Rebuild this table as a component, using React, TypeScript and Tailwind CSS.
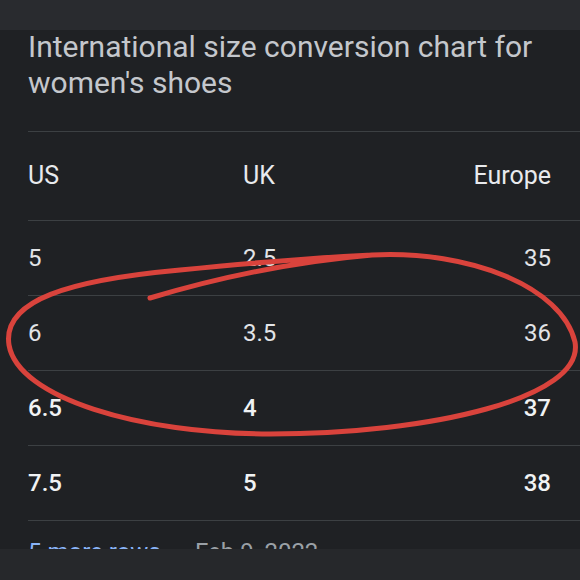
const rows = [
  { us: "5", uk: "2.5", eu: "35", bold: false },
  { us: "6", uk: "3.5", eu: "36", bold: false },
  { us: "6.5", uk: "4", eu: "37", bold: true },
  { us: "7.5", uk: "5", eu: "38", bold: true },
];

export default function App() {
  return (
    <div
      className="relative w-[580px] h-[580px] overflow-hidden bg-[#1f2124] flex flex-col"
      style={{ fontFamily: "Roboto, 'Open Sans', sans-serif" }}
    >
      <div className="h-[30px] bg-[#292b2f] shrink-0" />

      <div className="h-[519px] shrink-0 overflow-hidden pl-[28px] flex flex-col">
        <h1 className="mt-[-1px] text-[30px] leading-[36px] text-[#c4c7cc] font-normal">
          International size conversion chart for
          <br />
          women's shoes
        </h1>

        <div className="mt-[30px] border-t border-[#3c4043]">
          <div className="h-[88px] grid grid-cols-[215px_1fr_auto] items-center pr-[29px] text-[25px] text-[#e8eaed]">
            <span>US</span>
            <span>UK</span>
            <span>Europe</span>
          </div>
          {rows.map((r) => (
            <div
              key={r.us}
              className={
                r.bold
                  ? "h-[75px] border-t border-[#3c4043] grid grid-cols-[215px_1fr_auto] items-center pr-[29px] text-[24px] text-[#f1f3f4] font-medium"
                  : "h-[75px] border-t border-[#3c4043] grid grid-cols-[215px_1fr_auto] items-center pr-[29px] text-[24px] text-[#e2e4e7]"
              }
            >
              <span>{r.us}</span>
              <span>{r.uk}</span>
              <span>{r.eu}</span>
            </div>
          ))}
          <div className="border-t border-[#3c4043] pt-[16px] text-[24px] leading-[30px] flex gap-[14px]">
            <span className="text-[#8ab4f8]">5 more rows</span>
            <span className="text-[#9aa0a6]">·</span>
            <span className="text-[#9aa0a6]">Feb 9, 2022</span>
          </div>
        </div>
      </div>

      <div className="flex-1 bg-[#26282b]" />

      <svg
        className="absolute inset-0 pointer-events-none"
        width="580"
        height="580"
        viewBox="0 0 580 580"
      >
        <path
          d="M 150 298 C 210 280, 290 262, 372 255 C 470 250, 562 287, 575 342 C 585 398, 430 434, 270 434 C 140 434, 18 398, 9 345 C 2 300, 70 280, 180 270 C 250 263, 310 258, 372 255"
          fill="none"
          stroke="#d9433c"
          strokeWidth="5"
          strokeLinecap="round"
        />
      </svg>
    </div>
  );
}
